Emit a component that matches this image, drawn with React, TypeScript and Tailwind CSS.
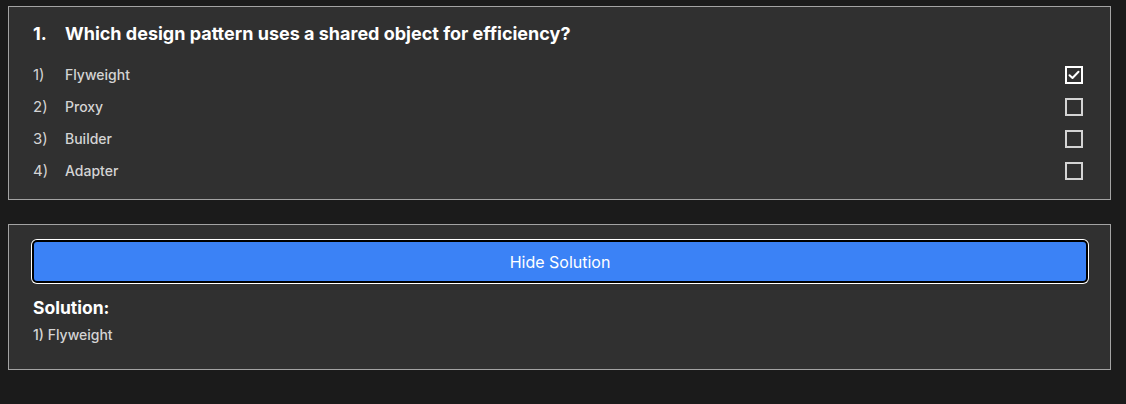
import React from "react";

const options = [
  { n: "1)", label: "Flyweight", checked: true },
  { n: "2)", label: "Proxy", checked: false },
  { n: "3)", label: "Builder", checked: false },
  { n: "4)", label: "Adapter", checked: false },
];

function Box({ checked }: { checked: boolean }) {
  return (
    <div
      className={
        checked
          ? "w-[18px] h-[18px] border-2 border-white flex items-center justify-center"
          : "w-[18px] h-[18px] border-2 border-[#d4d4d4]"
      }
    >
      {checked && (
        <svg width="12" height="10" viewBox="0 0 12 10" fill="none">
          <path d="M1.5 5.2 L4.5 8 L10.5 1.8" stroke="white" strokeWidth="2" strokeLinecap="round" strokeLinejoin="round" />
        </svg>
      )}
    </div>
  );
}

export default function App() {
  return (
    <div
      className="min-h-[404px] bg-[#1b1b1b] pt-[6px] pl-2"
      style={{ fontFamily: "Inter, 'Noto Sans', sans-serif" }}
    >
      <div className="w-[1103px] border border-[#a3a3a3] bg-[#303030] pt-[15px] pb-3 pl-6 pr-[27px]">
        <div className="flex items-center h-[22px] text-[18px] font-bold text-white">
          <span className="w-8">1.</span>
          <span>Which design pattern uses a shared object for efficiency?</span>
        </div>
        <div className="mt-[15px] flex flex-col">
          {options.map((o) => (
            <div key={o.n} className="h-8 flex items-center">
              <div className="flex-1 flex items-baseline text-[#d4d4d4]">
                <span className="w-8 text-[15px]">{o.n}</span>
                <span className="text-[14px] font-medium">{o.label}</span>
              </div>
              <Box checked={o.checked} />
            </div>
          ))}
        </div>
      </div>

      <div className="mt-6 w-[1103px] h-[146px] border border-[#a3a3a3] bg-[#303030] pt-[15px] pl-[23px] pr-[22px]">
        <button className="w-full h-[43px] rounded-[5px] bg-[#3b82f6] border-2 border-black ring-1 ring-white text-white text-[16px]">
          Hide Solution
        </button>
        <div className="mt-[13px] pl-px text-[17.5px] font-bold text-white leading-6">Solution:</div>
        <div className="mt-[5px] pl-px text-[14px] font-medium text-[#d4d4d4] leading-5">1) Flyweight</div>
      </div>
    </div>
  );
}
